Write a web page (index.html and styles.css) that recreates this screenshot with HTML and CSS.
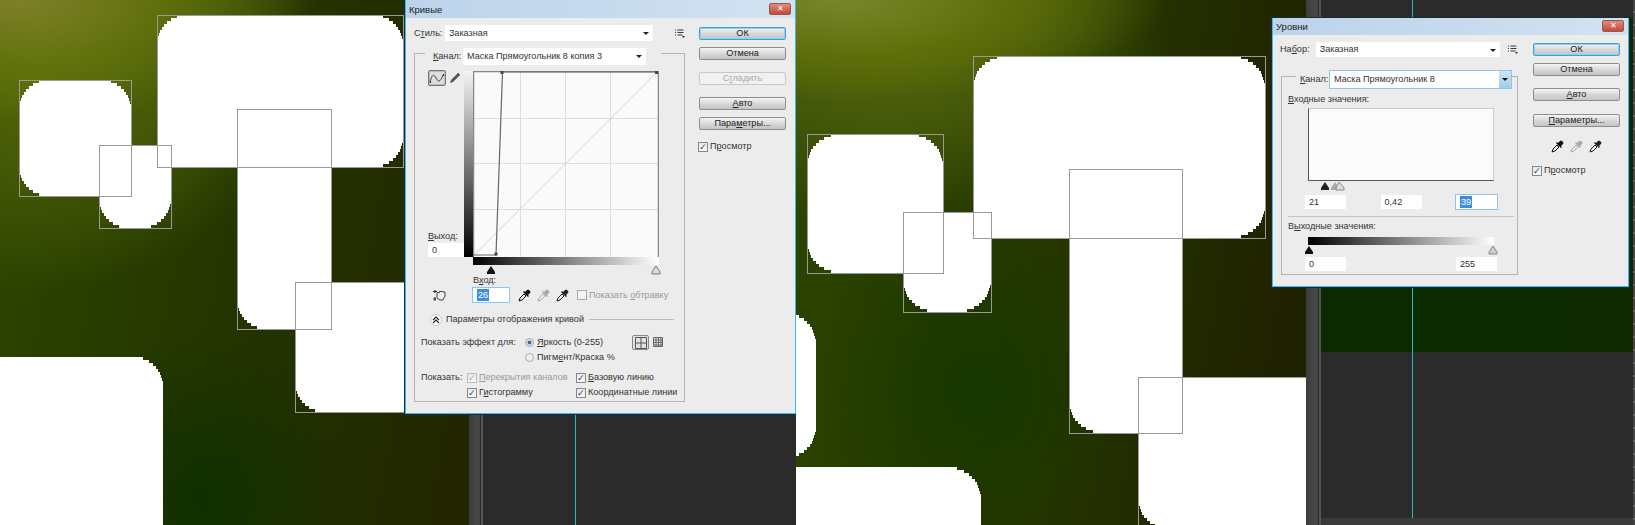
FILE: index.html
```html
<!DOCTYPE html>
<html lang="ru">
<head>
    <meta charset="UTF-8">
    <title>Кривые и Уровни</title>
    <link rel="stylesheet" href="styles.css">
</head>
<body>

    <svg class="defs" width="0" height="0">
        <symbol id="dropper" viewBox="0 0 13 13">
            <path d="M1 12l1-3 4-4 2 2-4 4z" fill="none" stroke="currentColor" stroke-width="1"/>
            <path d="M5 3l1-1 1 1 2-2q1-1 2 0l1 1q1 1 0 2l-2 2 1 1-1 1z" fill="currentColor"/>
        </symbol>
        <symbol id="list" viewBox="0 0 10 9">
            <path d="M0 1h1M0 3.500h1M0 6h1M2.500 1h6M2.500 3.500h6M2.500 6h5" stroke="#333" stroke-width="1" fill="none"/>
            <path d="M7 7h3l-1.500 2z" fill="#333"/>
        </symbol>
    </svg>

    <div class="page">

        <!-- left window -->
        <div class="panel panel_a">
            <div class="doc doc_a">
                <svg class="shapes" width="469" height="525">
                    <path class="shape" d="M157 39h1v-3h1v-3h1v-3h2v-3h2v-3h3v-3h4v-3h6v-3H383v3h6v3h4v3h3v3h2v3h2v3h1v3h1v3h1V143h-1v3h-1v3h-1v3h-2v3h-2v3h-3v3h-4v3h-6v3H157z"/>
                    <path class="shape" d="M19 104h1v-3h1v-3h1v-3h2v-3h2v-3h3v-3h4v-3h6v-3H111v3h6v3h4v3h3v3h2v3h2v3h1v3h1v3h1V196H39v-3h-6v-3h-4v-3h-3v-3h-2v-3h-2v-3h-1v-3h-1v-3h-1z"/>
                    <path class="shape" d="M99 145H171V204h-1v3h-1v3h-1v3h-2v3h-2v3h-3v3h-4v3h-6v3H119v-3h-6v-3h-4v-3h-3v-3h-2v-3h-2v-3h-1v-3h-1v-3h-1z"/>
                    <path class="shape" d="M237 109H331V329H257v-3h-6v-3h-4v-3h-3v-3h-2v-3h-2v-3h-1v-3h-1v-3h-1z"/>
                    <path class="shape" d="M295 282H469V412H315v-3h-6v-3h-4v-3h-3v-3h-2v-3h-2v-3h-1v-3h-1v-3h-1z"/>
                    <path class="shape" d="M0 357H143v3h6v3h4v3h3v3h2v3h2v3h1v3h1v3h1V525H0z"/>
                    <rect class="box" x="157.500" y="15.500" width="246" height="152"/>
                    <rect class="box" x="19.500" y="80.500" width="112" height="116"/>
                    <rect class="box" x="99.500" y="145.500" width="72" height="83"/>
                    <rect class="box" x="237.500" y="109.500" width="94" height="220"/>
                    <rect class="box" x="295.500" y="282.500" width="150" height="130"/>
                </svg>
            </div>
            <div class="strip"></div>
            <div class="paste">
                <div class="guide guide_a"></div>
            </div>

            <div class="dialog dialog_curves">
                <div class="title">
                    <span>Кривые</span>
                    <div class="close">✕</div>
                </div>
                <div class="dlg_body">
                    <div class="dlg_main">
                        <div class="preset_row">
                            <label class="preset_label">С<u>т</u>иль:</label>
                            <div class="combo combo_style">Заказная<i class="caret"></i></div>
                            <svg class="list_icon" width="10" height="9"><use href="#list"/></svg>
                        </div>
                        <div class="group group_curves">
                            <div class="legend legend_curves">
                                <label class="legend_label"><u>К</u>анал:</label>
                                <div class="combo combo_channel_a">Маска Прямоугольник 8 копия 3<i class="caret"></i></div>
                            </div>
                            <div class="curve_area">
                                <div class="tool_col">
                                    <div class="tool_row">
                                        <div class="tool_btn">
                                            <svg width="16" height="14"><path d="M1 11C3 3 5 3 7 7s4 5 7-3" fill="none" stroke="#444" stroke-width="1"/><path d="M1 11h1M14 4h1" stroke="#222" stroke-width="2"/></svg>
                                        </div>
                                        <svg class="pencil" width="12" height="12"><path d="M1 11l1-3 6-6 2 2-6 6z" fill="#555"/><path d="M8 2l1-1 2 2-1 1z" fill="#222"/></svg>
                                    </div>
                                    <div class="field_stack">
                                        <label><u>В</u>ыход:</label>
                                        <div class="field field_out">0</div>
                                    </div>
                                </div>
                                <div class="grad_v"></div>
                                <svg class="graph" width="186" height="186">
                                    <rect class="graph_bg" x="0" y="0" width="186" height="186"/>
                                    <path class="graph_grid" d="M47.500 0V186M92.500 0V186M137.500 0V186M0 47.500H186M0 92.500H186M0 138.500H186"/>
                                    <path class="graph_base" d="M0 185L185 0"/>
                                    <path class="graph_frame" d="M.5 186V.5H185.500V186"/>
                                    <path class="graph_curve" d="M1 184H23L29.500 1H185"/>
                                    <rect class="graph_point" x="27.500" y="0" width="3" height="3"/>
                                    <rect class="graph_point" x="182" y="0" width="3" height="3"/>
                                    <rect class="graph_point" x="21.500" y="181.500" width="3" height="3"/>
                                </svg>
                            </div>
                            <div class="grad_h grad_h_curves"></div>
                            <svg class="sliders sliders_curves" width="190" height="9">
                                <polygon points="18,0 22,6 22,8 14,8 14,6" fill="#111"/>
                                <polygon points="183,0 187,6 187,8 179,8 179,6" fill="#ddd" stroke="#777"/>
                            </svg>
                            <label class="in_label">В<u>х</u>од:</label>
                            <div class="in_row">
                                <svg class="hand" width="15" height="13"><path d="M5 6V4l1-1 1 1 1-2 1 1 1-1 1 1 2 0v4l-2 4H8L5 9z" fill="none" stroke="#444"/><path d="M3 1v3M1 2.500h4M3 8v4M1 10h3" stroke="#222"/></svg>
                                <div class="field field_focus"><span class="sel">26</span></div>
                                <div class="droppers">
                                    <svg class="drop_black" width="13" height="13"><use href="#dropper"/></svg>
                                    <svg class="drop_gray" width="13" height="13"><use href="#dropper"/></svg>
                                    <svg class="drop_dark" width="13" height="13"><use href="#dropper"/></svg>
                                </div>
                                <div class="check check_off"><i class="box_off"></i><span>Показать <u>о</u>бтравку</span></div>
                            </div>
                            <div class="section_row">
                                <div class="chevron">
                                    <svg width="8" height="8"><path d="M1 4l3-3 3 3M1 7l3-3 3 3" fill="none" stroke="#222" stroke-width="1.200"/></svg>
                                </div>
                                <span class="section_text">Параметры отображения кривой</span>
                                <div class="section_line"></div>
                            </div>
                            <div class="effect_row">
                                <div class="effect_label">Показать эффект для:</div>
                                <div class="radios">
                                    <div class="radio_item"><i class="radio radio_on"></i><span><u>Я</u>ркость (0-255)</span></div>
                                    <div class="radio_item"><i class="radio"></i><span>Пигм<u>е</u>нт/Краска %</span></div>
                                </div>
                                <div class="grid_btn">
                                    <svg width="12" height="12"><path d="M.5.500h11v11H.5zM6 0v12M0 6h12" fill="none" stroke="#555"/></svg>
                                </div>
                                <svg class="grid_small" width="10" height="10"><path d="M.5.500h9v9H.5zM3 0v10M5.500 0v10M8 0v10M0 3h10M0 5.500h10M0 8h10" fill="none" stroke="#666"/></svg>
                            </div>
                            <div class="show_grid">
                                <div class="show_label">Показать:</div>
                                <div class="check check_dim"><i class="box_on">✓</i><span><u>П</u>ерекрытия каналов</span></div>
                                <div class="check"><i class="box_on">✓</i><span><u>Б</u>азовую линию</span></div>
                                <div></div>
                                <div class="check"><i class="box_on">✓</i><span>Г<u>и</u>стограмму</span></div>
                                <div class="check"><i class="box_on">✓</i><span>Коор<u>д</u>инатные линии</span></div>
                            </div>
                        </div>
                    </div>
                    <div class="dlg_side side_a">
                        <button class="btn btn_default">ОК</button>
                        <button class="btn gap_s">Отмена</button>
                        <button class="btn gap_m btn_off">С<u>г</u>ладить</button>
                        <button class="btn gap_m"><u>А</u>вто</button>
                        <button class="btn gap_s">Пара<u>м</u>етры...</button>
                        <div class="check preview_a"><i class="box_on">✓</i><span>П<u>р</u>осмотр</span></div>
                    </div>
                </div>
            </div>
        </div>

        <!-- right window -->
        <div class="panel panel_b">
            <div class="doc doc_b">
                <svg class="shapes" width="510" height="525">
                    <path class="shape" d="M177 83h1v-3h1v-3h1v-3h1v-3h2v-3h3v-3h3v-3h5v-3h7v-3H445v3h7v3h5v3h3v3h3v3h2v3h1v3h1v3h1v3h1V211h-1v3h-1v3h-1v3h-1v3h-2v3h-3v3h-3v3h-5v3h-7v3H177z"/>
                    <path class="shape" d="M11 161h1v-3h1v-3h1v-3h1v-3h2v-3h3v-3h3v-3h5v-3h7v-3H123v3h7v3h5v3h3v3h3v3h2v3h1v3h1v3h1v3h1V273H35v-3h-7v-3h-5v-3h-3v-3h-3v-3h-2v-3h-1v-3h-1v-3h-1v-3h-1z"/>
                    <path class="shape" d="M107 212H195V285h-1v3h-1v3h-1v3h-1v3h-2v3h-3v3h-3v3h-5v3h-7v3H131v-3h-7v-3h-5v-3h-3v-3h-3v-3h-2v-3h-1v-3h-1v-3h-1v-3h-1z"/>
                    <path class="shape" d="M273 169H386V433H297v-3h-7v-3h-5v-3h-3v-3h-3v-3h-2v-3h-1v-3h-1v-3h-1v-3h-1z"/>
                    <path class="shape" d="M342 377H510V530H366v-3h-7v-3h-5v-3h-3v-3h-3v-3h-2v-3h-1v-3h-1v-3h-1v-3h-1z"/>
                    <path class="shape" d="M0 467H161v3h7v3h5v3h3v3h3v3h2v3h1v3h1v3h1v3h1V525H0z"/>
                    <path class="shape" d="M-4 312v3h7v3h5v3h3v3h3v3h2v3h1v3h1v3h1v3h1V432h-1v3h-1v3h-1v3h-1v3h-2v3h-3v3h-3v3h-5v3h-7v3z"/>
                    <rect class="box" x="177.500" y="56.500" width="292" height="182"/>
                    <rect class="box" x="11.500" y="134.500" width="136" height="139"/>
                    <rect class="box" x="107.500" y="212.500" width="88" height="100"/>
                    <rect class="box" x="273.500" y="169.500" width="113" height="264"/>
                    <rect class="box" x="342.500" y="377.500" width="300" height="200"/>
                </svg>
            </div>
            <div class="strip"></div>
            <div class="paste paste_b">
                <div class="paste_green"></div>
                <div class="guide guide_b"></div>
            </div>
            <div class="edge"></div>

            <div class="dialog dialog_levels">
                <div class="title title_b">
                    <span>Уровни</span>
                    <div class="close">✕</div>
                </div>
                <div class="dlg_body">
                    <div class="dlg_main">
                        <div class="preset_row preset_b">
                            <label class="preset_label_b">На<u>б</u>ор:</label>
                            <div class="combo combo_set">Заказная<i class="caret"></i></div>
                            <svg class="list_icon list_b" width="10" height="9"><use href="#list"/></svg>
                        </div>
                        <div class="group group_levels">
                            <div class="legend legend_levels">
                                <label class="legend_label"><u>К</u>анал:</label>
                                <div class="combo combo_channel_b combo_focus">Маска Прямоугольник 8<i class="drop_btn"></i></div>
                            </div>
                            <label class="lv_label lv_first"><u>В</u>ходные значения:</label>
                            <div class="hist"></div>
                            <svg class="sliders sliders_lv" width="190" height="9">
                                <polygon points="17,0 21,6 21,8 13,8 13,6" fill="#222"/>
                                <polygon points="27,0 31,6 31,8 23,8 23,6" fill="#aaa"/>
                                <polygon points="31,0 36,6 36,8 28,8 28,6" fill="#ddd" stroke="#888"/>
                            </svg>
                            <div class="lv_fields lv_fields_in">
                                <div class="field field_lv">21</div>
                                <div class="field field_lv">0,42</div>
                                <div class="field field_lv field_focus"><span class="sel">39</span></div>
                            </div>
                            <div class="lv_line"></div>
                            <label class="lv_label">В<u>ы</u>ходные значения:</label>
                            <div class="grad_h grad_h_levels"></div>
                            <svg class="sliders sliders_out" width="190" height="9">
                                <polygon points="5,1 9,7 9,9 1,9 1,7" fill="#111"/>
                                <polygon points="189,1 193,7 193,9 185,9 185,7" fill="#ccc" stroke="#888"/>
                            </svg>
                            <div class="lv_fields lv_fields_out">
                                <div class="field field_lv">0</div>
                                <div class="field field_lv">255</div>
                            </div>
                        </div>
                    </div>
                    <div class="dlg_side side_b">
                        <button class="btn btn_default">ОК</button>
                        <button class="btn gap_s">Отмена</button>
                        <button class="btn gap_m"><u>А</u>вто</button>
                        <button class="btn gap_l"><u>П</u>араметры...</button>
                        <div class="droppers droppers_b">
                            <svg class="drop_black" width="13" height="13"><use href="#dropper"/></svg>
                            <svg class="drop_gray" width="13" height="13"><use href="#dropper"/></svg>
                            <svg class="drop_dark" width="13" height="13"><use href="#dropper"/></svg>
                        </div>
                        <div class="check preview_b"><i class="box_on">✓</i><span>П<u>р</u>осмотр</span></div>
                    </div>
                </div>
            </div>
        </div>

    </div>
</body>
</html>
```

FILE: styles.css
```css
*{margin:0;padding:0;box-sizing:border-box;}
html,body{width:1635px;height:525px;overflow:hidden;background:#2b2b2b;}
body{font-family:"Liberation Sans",Arial,sans-serif;font-size:9.1px;line-height:13px;color:#333;}
u{text-decoration:underline;}
.defs{position:absolute;}

.page{display:flex;width:1635px;height:525px;}
.panel{position:relative;display:flex;height:525px;overflow:hidden;}
.panel_a{width:796px;}
.panel_b{width:839px;}

/* documents */
.doc{height:525px;flex:none;}
.doc_a{
    width:469px;
    background:
        radial-gradient(ellipse 300px 120px at 20px 0,rgba(130,130,45,.9),rgba(105,120,15,.65) 50%,rgba(90,105,10,0) 100%),
        radial-gradient(ellipse 270px 250px at 40px 40px,#5c6f0a 0,#435706 55%,rgba(50,70,0,0) 100%),
        radial-gradient(ellipse 150px 170px at 200px 500px,#0f3000 0,rgba(16,48,0,0) 100%),
        linear-gradient(100deg,#2d4600 0,#243300 55%,#222500 100%);
}
.doc_b{
    width:510px;
    background:
        radial-gradient(ellipse 330px 100px at 40px 0,rgba(125,140,50,.85),rgba(100,115,10,.7) 55%,rgba(90,105,10,0) 100%),
        radial-gradient(ellipse 280px 200px at 90px 20px,#5a6c08 0,#46590a 50%,rgba(60,80,0,0) 100%),
        radial-gradient(ellipse 160px 180px at 180px 390px,#163800 0,rgba(22,56,0,0) 100%),
        linear-gradient(100deg,#2c4600 0,#263400 55%,#1f2200 90%);
}
.shapes{display:block;}
.shape{fill:#fff;shape-rendering:crispEdges;}
.box{fill:none;stroke:#999;stroke-width:1;shape-rendering:crispEdges;}

/* grey strip and pasteboard */
.strip{width:14px;flex:none;background:linear-gradient(90deg,#3c3c3c 0,#484848 60%,#444 78%,#2b2b2b 79%,#2b2b2b 86%,#555 87%);}
.panel_b .strip{width:15px;}
.paste{position:relative;flex:1;background:#2b2b2b;}
.paste_b{border-bottom:7px solid #3a3a3a;}
.paste_green{height:334px;margin-top:18px;background:linear-gradient(90deg,#0b2a00,#0f2a00);}
.guide{position:absolute;top:0;bottom:0;width:1px;background:#35b5bf;}
.guide_a{left:92px;}
.guide_b{left:91px;}
.edge{width:2px;flex:none;background:repeating-linear-gradient(180deg,#444 0,#444 11px,#666 11px,#666 13px);}

/* dialog shell */
.dialog{position:absolute;background:#ececec;border:1px solid #39bde6;border-top:0;outline:1px solid #1c2a33;}
.dialog_curves{left:405px;top:0;width:391px;height:414px;}
.dialog_levels{left:476px;top:18px;width:357px;height:269px;}
.title{display:flex;align-items:center;justify-content:space-between;height:18px;padding:0 4px 0 3px;background:linear-gradient(90deg,#bcd3ea,#d2e2f1);font-size:9.5px;color:#222;}
.title_b{height:17px;}
.close{width:22px;height:12px;margin-top:-1px;border:1px solid #8c5a52;border-radius:2px;background:linear-gradient(#e58a78,#c4483a);color:#fff;font-size:8px;line-height:10px;text-align:center;}
.dlg_body{display:flex;}
.dlg_main{flex:none;}
.dlg_side{display:flex;flex-direction:column;width:87px;flex:none;}
.side_a{margin:9px 0 0 14px;}
.side_b{margin:8px 0 0 15px;}
.dialog_curves .dlg_main{width:279px;padding-left:8px;}
.dialog_levels .dlg_main{width:245px;padding-left:7px;}

/* buttons */
.btn{display:block;width:87px;height:13px;border:1px solid #8e8e8e;border-radius:2px;background:linear-gradient(#f5f5f5,#d6d6d6 55%,#c4c4c4);font:inherit;line-height:11px;color:#222;}
.btn_default{border-color:#3ba6d6;box-shadow:0 0 0 1px #8fd0ee inset;}
.btn_off{background:#f1f1f1;border-color:#c8c8c8;color:#aaa;}
.gap_s{margin-top:7px;}
.gap_m{margin-top:12px;}
.gap_l{margin-top:13px;}

/* combos */
.combo{position:relative;height:16px;padding-left:4px;background:#fff;line-height:16px;}
.caret{position:absolute;right:4px;top:7px;border:3px solid transparent;border-top:3px solid #222;border-bottom:0;}
.preset_row{display:flex;align-items:center;margin-top:7px;}
.preset_b{margin-top:7px;}
.preset_label{width:31px;}
.preset_label_b{width:36px;}
.combo_style{width:209px;}
.combo_set{width:186px;height:15px;line-height:15px;}
.list_icon{margin-left:22px;}
.list_b{margin-left:8px;}

/* group box */
.group{border:1px solid #b4b4b4;}
.group_curves{width:271px;height:349px;margin-top:12px;}
.group_levels{width:237px;height:199px;margin-top:19px;margin-left:1px;}
.legend{display:flex;align-items:center;height:17px;margin-top:-6px;background:#ececec;}
.legend_curves{width:236px;margin-left:10px;padding-left:8px;}
.legend_levels{width:215px;margin-left:14px;padding-left:4px;}
.legend_label{width:30px;flex:none;}
.combo_channel_a{width:183px;height:17px;line-height:17px;}
.combo_channel_b{width:183px;height:17px;line-height:17px;}
.combo_focus{outline:1px solid #8cc6e8;}
.drop_btn{position:absolute;right:0;top:0;width:12px;height:17px;background:linear-gradient(#cfe6f6,#9fcdea);}
.drop_btn::after{content:"";position:absolute;left:3px;top:7px;border:3px solid transparent;border-top:3px solid #111;border-bottom:0;}

/* curves graph */
.curve_area{display:flex;margin-top:6px;height:186px;}
.tool_col{display:flex;flex-direction:column;justify-content:space-between;width:49px;flex:none;padding-left:13px;}
.tool_row{display:flex;align-items:center;margin-top:-1px;}
.tool_btn{width:18px;height:16px;border:1px solid #777;border-radius:2px;background:#ddd;box-shadow:0 0 0 1px #bbb inset;}
.tool_btn svg{display:block;}
.pencil{margin-left:3px;}
.field_stack label{display:block;}
.field{height:14px;padding-left:4px;background:#fff;line-height:14px;color:#333;}
.field_out{width:36px;}
.grad_v{width:9px;flex:none;background:linear-gradient(#f4f4f4,#000);}
.graph{display:block;flex:none;}
.graph_bg{fill:#fafafa;}
.graph_grid{stroke:#dedede;stroke-width:1;fill:none;shape-rendering:crispEdges;}
.graph_base{stroke:#d4d4d4;stroke-width:1;fill:none;}
.graph_frame{stroke:#888;stroke-width:1.500;fill:none;}
.graph_curve{stroke:#666;stroke-width:1.200;fill:none;}
.graph_point{fill:#444;}
.grad_h{height:8px;background:linear-gradient(90deg,#000,#fff);}
.grad_h_curves{width:186px;margin:0 0 0 58px;}
.sliders{display:block;overflow:visible;}
.sliders_curves{margin:1px 0 0 58px;}

.in_label{display:block;margin:-1px 0 0 58px;height:14px;}
.in_row{display:flex;align-items:center;height:14px;padding-left:17px;}
.hand{width:15px;flex:none;}
.field_focus{outline:1px solid #8cc6e8;width:36px;margin-left:26px;}
.sel{display:inline-block;background:#3b8fdc;color:#fff;line-height:12px;padding:0 1px;}
.droppers{display:flex;align-items:center;gap:6px;margin-left:9px;}
.drop_black{color:#111;}
.drop_gray{color:#aaa;}
.drop_dark{color:#222;}
.check{display:flex;align-items:center;white-space:nowrap;}
.check_off{margin-left:8px;color:#999;}
.box_off,.box_on{display:block;flex:none;width:10px;height:10px;margin-right:2px;border:1px solid #aaa;background:#f4f4f4;}
.box_on{border-color:#888;background:linear-gradient(#e8e8e8,#fafafa);color:#26438a;font-size:9px;line-height:8px;font-style:normal;text-align:center;}
.check_dim{color:#999;}
.check_dim .box_on{color:#aaa;border-color:#bbb;}

.section_row{display:flex;align-items:center;margin-top:11px;padding-left:15px;height:13px;}
.section_text{white-space:nowrap;}
.chevron{width:12px;height:12px;margin-right:4px;border-radius:50%;background:#fff;border:1px solid #ccc;display:flex;align-items:center;justify-content:center;flex:none;}
.section_line{flex:none;width:85px;height:1px;margin-left:5px;background:#bbb;}

.effect_row{display:flex;margin-top:10px;padding-left:6px;}
.effect_label{width:104px;flex:none;white-space:nowrap;}
.radios{display:flex;flex-direction:column;gap:2px;width:107px;flex:none;}
.radio_item{display:flex;align-items:center;}
.radio{display:block;width:9px;height:9px;margin-right:3px;border:1px solid #aaa;border-radius:50%;background:#eee;flex:none;}
.radio_on{background:radial-gradient(circle,#2b6fb0 0,#2b6fb0 35%,#ddd 45%);}
.grid_btn{width:17px;height:15px;margin-top:-1px;border:1px solid #888;border-radius:2px;background:#e2e2e2;display:flex;align-items:center;justify-content:center;}
.grid_small{margin:1px 0 0 4px;}

.show_grid{display:grid;grid-template-columns:46px 109px 1fr;grid-auto-rows:15px;margin-top:6px;padding-left:6px;align-items:center;}
.preview_a{margin-top:10px;margin-left:-1px;}

/* levels */
.lv_label{display:block;padding-left:6px;height:13px;}
.lv_first{margin-top:5px;}
.hist{width:186px;height:73px;margin:2px 0 0 26px;background:#fbfbfb;border-left:1px solid #555;border-bottom:1px solid #555;border-top:1px solid #ccc;border-right:1px solid #ccc;}
.sliders_lv{margin:1px 0 0 26px;}
.lv_fields{display:flex;justify-content:space-between;width:192px;margin-left:23px;}
.lv_fields_in{margin-top:4px;}
.field_lv{width:41px;}
.field_lv.field_focus{margin-left:0;}
.lv_line{width:226px;height:1px;margin:7px 0 3px 6px;background:#c4c4c4;}
.grad_h_levels{width:186px;margin:4px 0 0 26px;}
.sliders_out{margin:0 0 0 22px;}
.lv_fields_out{margin-top:3px;}
.droppers_b{margin:13px 0 0 18px;}
.preview_b{margin-top:11px;margin-left:-1px;}
```
